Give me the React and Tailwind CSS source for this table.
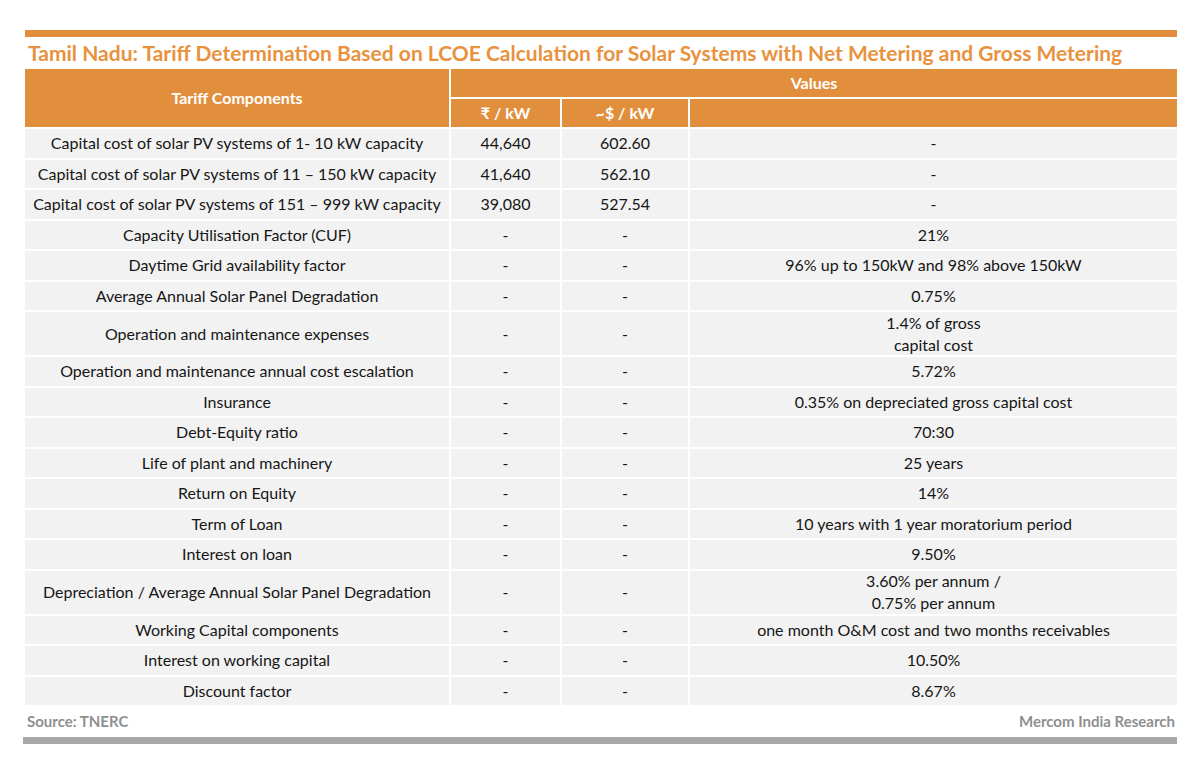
import React from "react";

const rows = [
  ["Capital cost of solar PV systems of 1- 10 kW capacity", "44,640", "602.60", ["-"]],
  ["Capital cost of solar PV systems of 11 – 150 kW capacity", "41,640", "562.10", ["-"]],
  ["Capital cost of solar PV systems of 151 – 999 kW capacity", "39,080", "527.54", ["-"]],
  ["Capacity Utilisation Factor (CUF)", "-", "-", ["21%"]],
  ["Daytime Grid availability factor", "-", "-", ["96% up to 150kW and 98% above 150kW"]],
  ["Average Annual Solar Panel Degradation", "-", "-", ["0.75%"]],
  ["Operation and maintenance expenses", "-", "-", ["1.4% of gross", "capital cost"]],
  ["Operation and maintenance annual cost escalation", "-", "-", ["5.72%"]],
  ["Insurance", "-", "-", ["0.35% on depreciated gross capital cost"]],
  ["Debt-Equity ratio", "-", "-", ["70:30"]],
  ["Life of plant and machinery", "-", "-", ["25 years"]],
  ["Return on Equity", "-", "-", ["14%"]],
  ["Term of Loan", "-", "-", ["10 years with 1 year moratorium period"]],
  ["Interest on loan", "-", "-", ["9.50%"]],
  ["Depreciation / Average Annual Solar Panel Degradation", "-", "-", ["3.60% per annum /", "0.75% per annum"]],
  ["Working Capital components", "-", "-", ["one month O&M cost and two months receivables"]],
  ["Interest on working capital", "-", "-", ["10.50%"]],
  ["Discount factor", "-", "-", ["8.67%"]],
];

const Cell = ({ children, tall }) => (
  <div
    className={`bg-[#f2f2f2] flex flex-col items-center justify-center text-center leading-[22px] ${
      tall ? "h-[43px]" : "h-[28.5px]"
    }`}
  >
    {children}
  </div>
);

const App = () => {
  return (
    <div
      className="w-[1200px] h-[770px] bg-white pt-[30px] text-[#161616]"
      style={{ fontFamily: "Lato, 'Open Sans', sans-serif" }}
    >
      <div className="ml-[25px] w-[1152px]">
        {/* top accent bar */}
        <div className="h-[7px] bg-[#e28f3d]" />
        <div className="h-[32px] flex items-center pl-[3px]">
          <h1 className="text-[21px] font-bold text-[#e8923e] whitespace-nowrap">
            Tamil Nadu: Tariff Determination Based on LCOE Calculation for Solar Systems with Net Metering and Gross Metering
          </h1>
        </div>

        <div className="grid grid-cols-[424px_109px_126px_1fr] gap-x-[2px] gap-y-[2px] text-[16px]">
          {/* header */}
          <div className="row-span-2 bg-[#e28f3d] text-white font-bold flex items-center justify-center">
            Tariff Components
          </div>
          <div className="col-span-3 h-[28px] bg-[#e28f3d] text-white font-bold flex items-center justify-center">
            Values
          </div>
          <div className="h-[28px] bg-[#e28f3d] text-white font-bold flex items-center justify-center">
            ₹ / kW
          </div>
          <div className="h-[28px] bg-[#e28f3d] text-white font-bold flex items-center justify-center">
            ~$ / kW
          </div>
          <div className="h-[28px] bg-[#e28f3d]" />

          {rows.map(([label, inr, usd, vals], i) => {
            const tall = vals.length > 1;
            return (
              <React.Fragment key={i}>
                <Cell tall={tall}>{label}</Cell>
                <Cell tall={tall}>{inr}</Cell>
                <Cell tall={tall}>{usd}</Cell>
                <Cell tall={tall}>
                  {vals.map((v, j) => (
                    <span key={j}>{v}</span>
                  ))}
                </Cell>
              </React.Fragment>
            );
          })}
        </div>

        <div className="flex justify-between items-center h-[32px] px-[2px] text-[15px] font-bold text-[#8f8f8f]">
          <span>Source: TNERC</span>
          <span>Mercom India Research</span>
        </div>
        <div className="h-[7px] bg-[#a8a8a8] -ml-[2px]" />
      </div>
    </div>
  );
};

export default App;
